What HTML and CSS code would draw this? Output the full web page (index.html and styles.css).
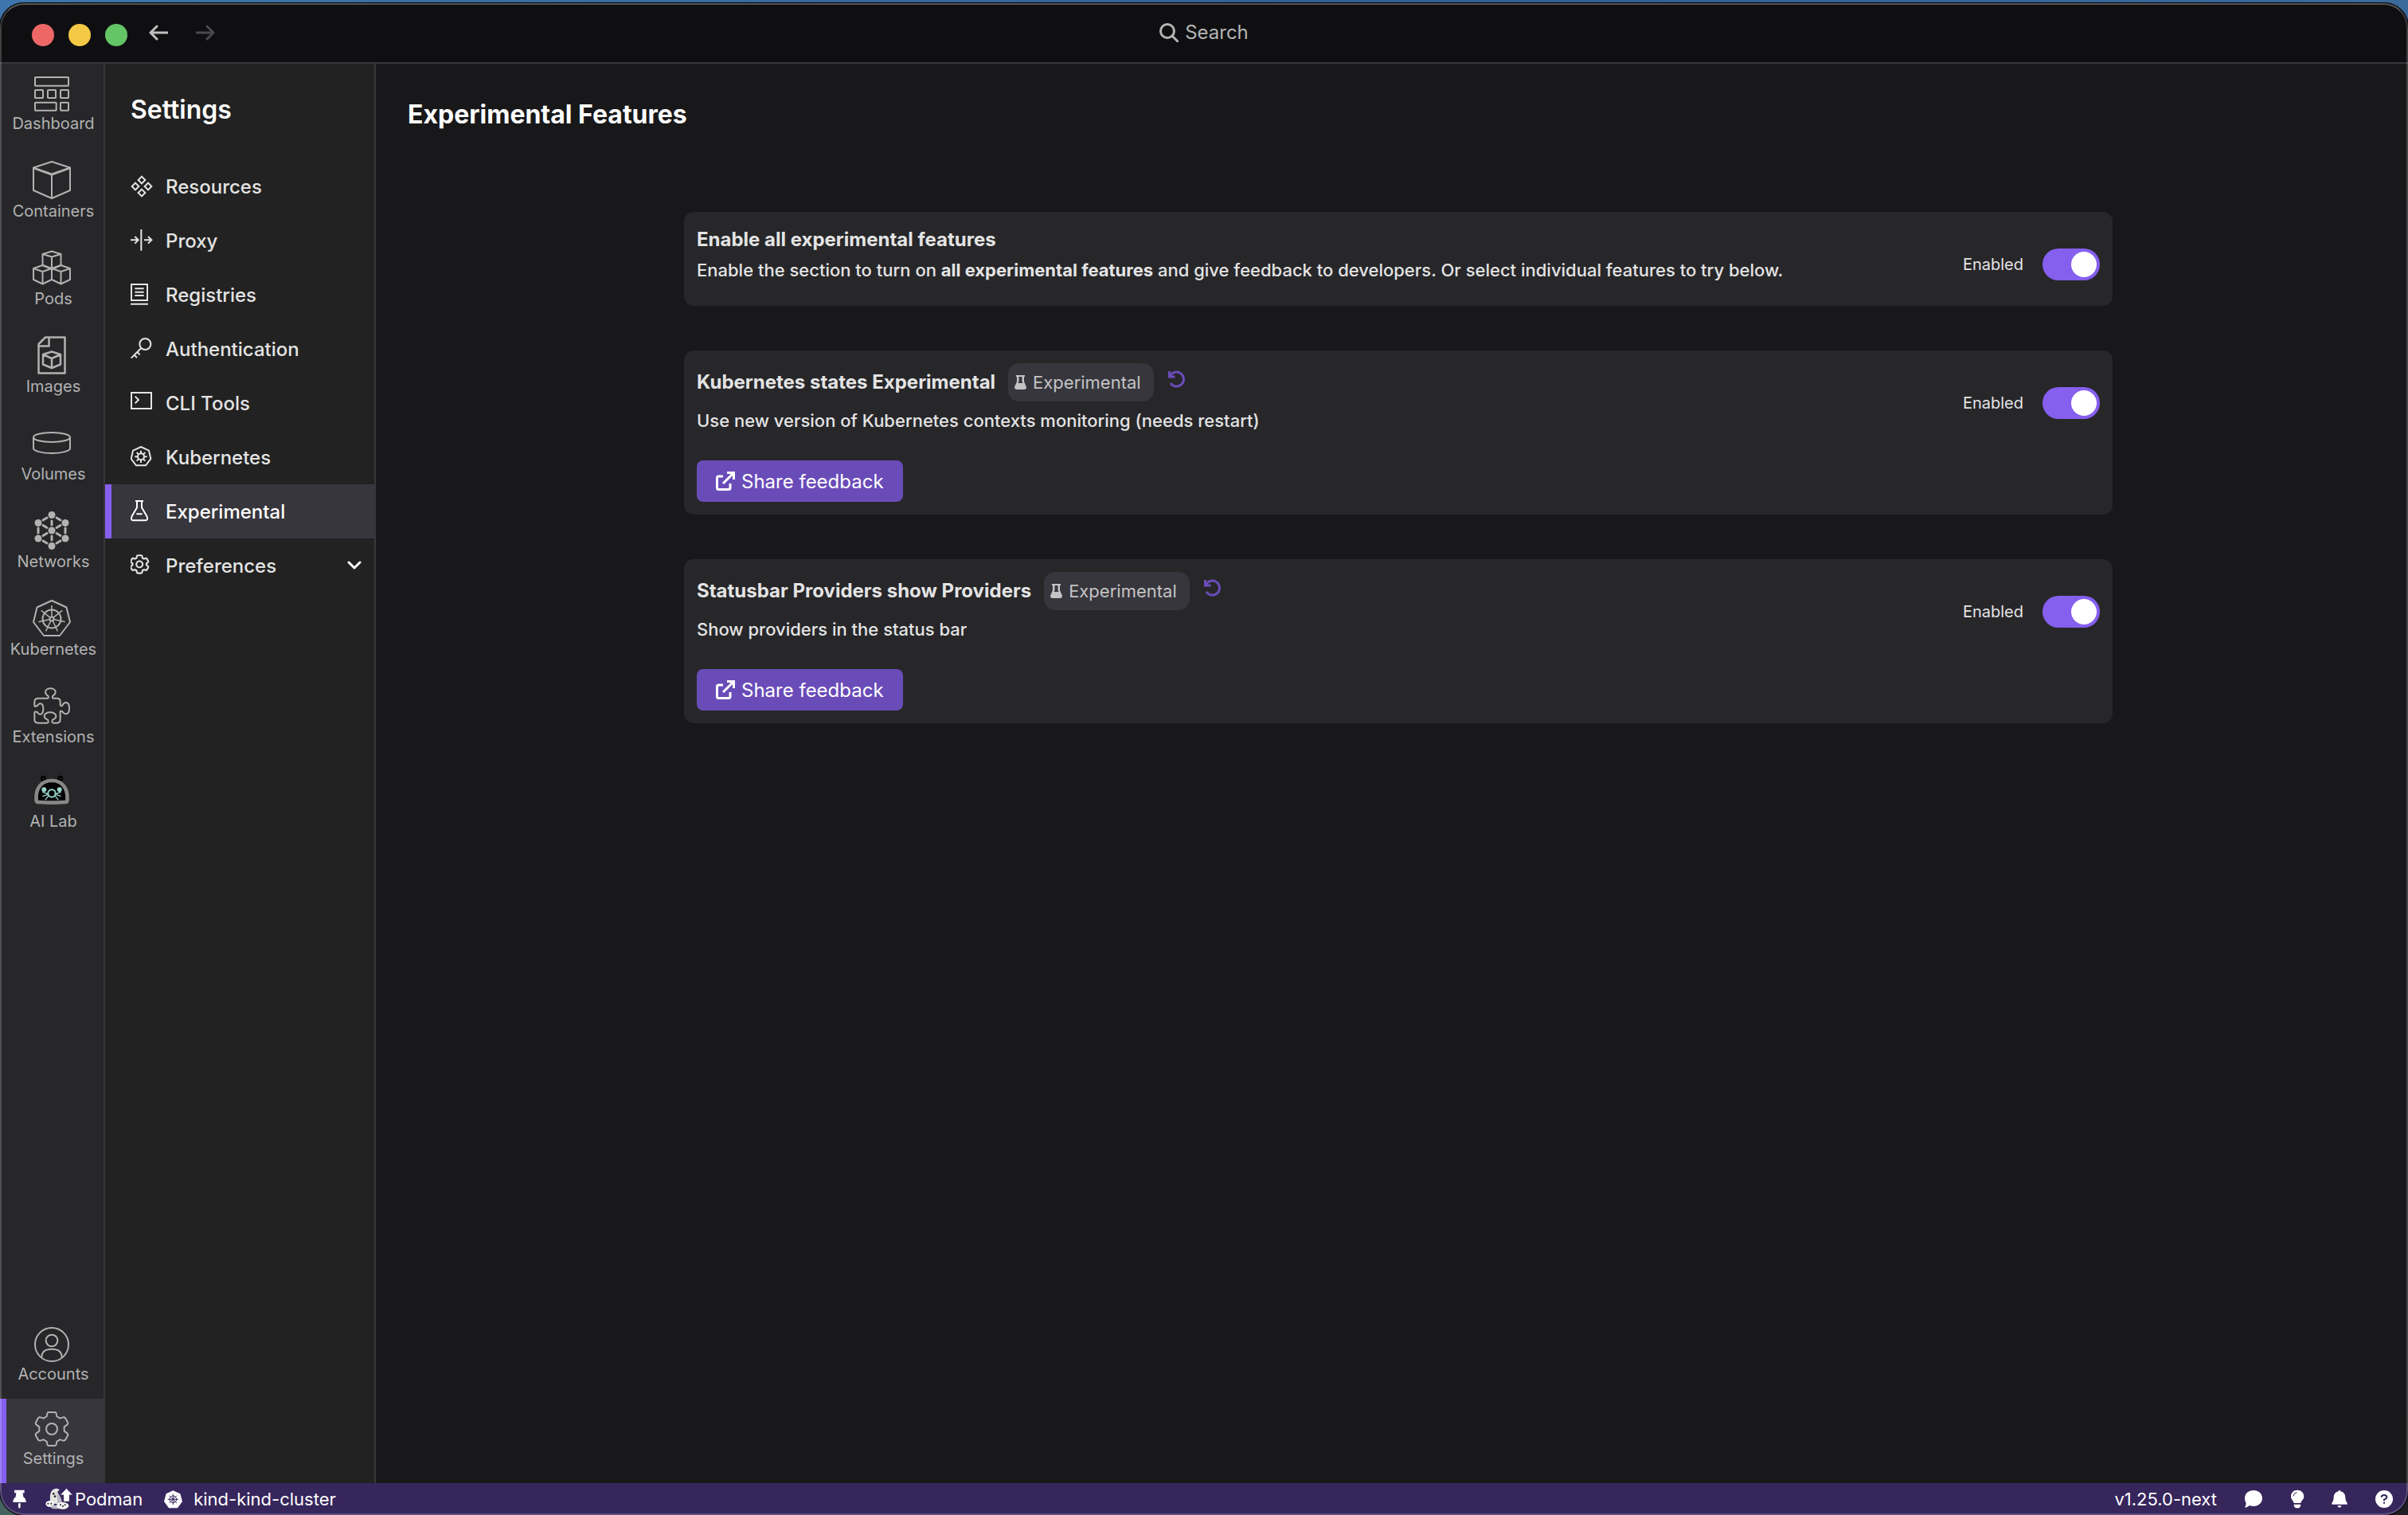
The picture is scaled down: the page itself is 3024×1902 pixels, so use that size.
FILE: index.html
```html
<!DOCTYPE html>
<html lang="en">
<head>
<meta charset="utf-8">
<title>Experimental Features</title>
<link rel="stylesheet" href="styles.css">
</head>
<body>
<div class="window">
  <header class="titlebar">
    <div class="titlebar-left">
      <button class="light light-close" aria-label="Close"></button>
      <button class="light light-min" aria-label="Minimize"></button>
      <button class="light light-max" aria-label="Zoom"></button>
      <button class="history" aria-label="Back"><svg width="24" height="20" viewBox="0 0 24 20"><path d="M23 10H2M10 2L2 10L10 18"/></svg></button>
      <button class="history history-off" aria-label="Forward"><svg width="24" height="20" viewBox="0 0 24 20"><path d="M1 10H22M14 2L22 10L14 18"/></svg></button>
    </div>
    <button class="search"><svg width="24" height="24" viewBox="0 0 24 24"><circle cx="10" cy="10" r="8.5"/><path d="M16 16L23 23"/></svg>Search</button>
    <div></div>
  </header>

  <div class="body">
    <nav class="rail" aria-label="App">
      <a class="rail-item" href="#dashboard"><svg width="44" height="44" viewBox="129 288 132 132"><rect x="132" y="291" width="126" height="32" rx="2"/><rect x="132" y="339" width="30" height="30" rx="2"/><rect x="180" y="339" width="30" height="30" rx="2"/><rect x="228" y="339" width="30" height="30" rx="2"/><rect x="132" y="386" width="80" height="30" rx="2"/><rect x="228" y="386" width="30" height="30" rx="2"/></svg><span>Dashboard</span></a>
      <a class="rail-item" href="#containers"><svg width="48" height="48" viewBox="0 0 48 48" stroke-width="2"><path d="M24 1L47 8.500V37L24 47L1 37V8.500ZM1 8.500L24 16.500L47 8.500M24 16.500V47M2 9.500L24 17.500L46 9.500"/></svg><span>Containers</span></a>
      <a class="rail-item" href="#pods"><svg width="48" height="48" viewBox="0 0 48 48" stroke-width="2"><path d="M24 3.500L35.500 7V21L24 26L12.500 21V7ZM12.500 7L24 10.500L35.500 7M24 10.500V38"/><path d="M12.500 21L24 25V39L12.500 44.500L1 39V25ZM1 25L12.500 29L24 25M12.500 29V44.500M35.500 21L47 25V39L35.500 44.500L24 39V25ZM24 25L35.500 29L47 25M35.500 29V44.500"/></svg><span>Pods</span></a>
      <a class="rail-item" href="#images"><svg width="48" height="48" viewBox="0 0 48 48" stroke-width="2.5"><path d="M16 1.500H40.500V46.500H7.500V10ZM20.500 2V12.500H8"/><path d="M24 19.500L35 23V35.500L24 40L13 35.500V23ZM13 23L24 28L35 23M24 28V40"/></svg><span>Images</span></a>
      <a class="rail-item" href="#volumes"><svg width="48" height="48" viewBox="0 0 48 48"><ellipse cx="24" cy="17" rx="23" ry="6"/><path d="M1 17V31C1 34 11 37 24 37S47 34 47 31V17"/></svg><span>Volumes</span></a>
      <a class="rail-item" href="#networks"><svg width="48" height="48" viewBox="0 0 48 48"><path stroke-width="3" stroke-linecap="round" d="M18 8L13 11M30 8L35 11M18 40L13 37M30 40L35 37M7 21V27M41 21V27M24 12V17M24 31V36M13 17.500L18 20.500M35 17.500L30 20.500M13 30.500L18 27.500M35 30.500L30 27.500"/><g class="solid"><circle cx="24" cy="4.500" r="4.500"/><circle cx="7" cy="14.500" r="4.500"/><circle cx="41" cy="14.500" r="4.500"/><circle cx="24" cy="24" r="4.500"/><circle cx="7" cy="34" r="4.500"/><circle cx="41" cy="34" r="4.500"/><circle cx="24" cy="43.500" r="4.500"/></g></svg><span>Networks</span></a>
      <a class="rail-item" href="#kubernetes"><svg width="48" height="48" viewBox="0 0 48 48"><path d="M24 2L42.500 10.500L47 29L34 46H14L1 29L5.500 10.500Z"/><circle cx="24" cy="25" r="11.500"/><circle cx="24" cy="25" r="2.500"/><path stroke-width="1.500" d="M24 22V8M26.300 23.200L37.300 14.400M26.900 25.700L40.600 28.800M25.300 27.700L31.400 40.300M22.700 27.700L16.600 40.300M21.100 25.700L7.400 28.800M21.700 23.200L10.700 14.400"/></svg><span>Kubernetes</span></a>
      <a class="rail-item" href="#extensions"><svg width="48" height="48" viewBox="123 306 144 144"><path d="M130 379V364Q130 350 144 350H178Q184 350 182 342C176 338 171 334 171 327C171 318 180 313 190 313S209 318 209 327C209 334 204 338 198 342Q196 350 202 350H214Q227 350 227 362V374Q227 380 234 378C238 370 242 366 248 366C257 366 261 376 261 388S257 409 248 409C242 409 238 405 234 399Q227 396 227 402V430Q227 443 214 443H204Q192 442 198 431C206 428 211 424 211 417C211 409 201 403 189 403S167 409 167 417C167 424 172 428 180 431Q186 443 176 443H144Q130 443 130 430V404Q132 398 140 402C144 408 147 410 151 410C159 410 163 400 163 389S159 370 151 370C147 370 144 374 140 378Q132 382 130 379Z"/></svg><span>Extensions</span></a>
      <a class="rail-item" href="#ai-lab"><svg width="44" height="44" viewBox="129 636 132 132"><g stroke="#000" stroke-width="7"><circle cx="163" cy="652" r="7"/><circle cx="227" cy="652" r="7"/></g><path class="helmet" d="M137 735C133 690 155 660 195 660S257 690 253 735Q252 741 245 741Q195 745 145 741Q138 741 137 735Z"/><g fill="#98d4c8" stroke="none"><circle cx="166" cy="694" r="9"/><circle cx="224" cy="694" r="9"/></g><g stroke="#98d4c8" stroke-width="4"><circle cx="195" cy="708" r="14" stroke-width="6"/><path d="M182 711L160 703M182 712L160 719M184 716L170 733M208 711L230 703M208 712L230 719M206 716L220 733"/></g></svg><span>AI Lab</span></a>
      <a class="rail-item rail-bottom" href="#accounts"><svg width="44" height="44" viewBox="129 78 132 132"><circle cx="195" cy="144" r="63"/><circle cx="195" cy="129" r="22"/><path d="M157 192C157 169 175 161 195 161S233 169 233 192"/></svg><span>Accounts</span></a>
      <a class="rail-item rail-active" href="#settings" aria-current="page"><svg width="44" height="44" viewBox="129 396 132 132"><circle cx="195" cy="462" r="21"/><path d="M183 399H207Q211 399 212 404L214 415Q220 417 226 422L238 418Q243 417 246 421L255 437Q257 441 254 445L242 454V470L254 479Q257 483 255 487L246 503Q243 507 238 506L226 502Q220 507 214 509L212 520Q211 525 207 525H183Q179 525 178 520L176 509Q170 507 164 502L152 506Q147 507 144 503L135 487Q133 483 136 479L148 470V454L136 445Q133 441 135 437L144 421Q147 417 152 418L164 422Q170 417 176 415L178 404Q179 399 183 399Z"/></svg><span>Settings</span></a>
    </nav>

    <nav class="side" aria-label="Settings">
      <h2 class="side-title">Settings</h2>
      <a class="side-item" href="#resources"><svg width="28" height="28" viewBox="492 660 84 84"><path d="M534 665L547 678L534 691L521 678ZM534 713L547 726L534 739L521 726ZM510 689L523 702L510 715L497 702ZM558 689L571 702L558 715L545 702Z"/></svg>Resources</a>
      <a class="side-item" href="#proxy"><svg width="28" height="28" viewBox="492 864 84 84"><path d="M532 864V944M492 904H520M508 891L521 904L508 917M543 904H570M558 891L571 904L558 917"/></svg>Proxy</a>
      <a class="side-item" href="#registries"><svg width="28" height="28" viewBox="492 1068 84 84"><path d="M495 1071H555V1131H495ZM508 1087H542M508 1100H542M508 1113H542M492 1145H558"/></svg>Registries</a>
      <a class="side-item" href="#authentication"><svg width="28" height="28" viewBox="492 72 84 84"><circle cx="547" cy="96" r="21"/><path d="M532 111L494 149M506 137L516 147M517 126L527 136"/></svg>Authentication</a>
      <a class="side-item" href="#cli"><svg width="28" height="28" viewBox="492 276 84 84"><path d="M495 279H570V339H495ZM509 293L522 306L509 319"/></svg>CLI Tools</a>
      <a class="side-item" href="#k8s"><svg width="28" height="28" viewBox="492 480 84 84"><path d="M531 483L561 497L568 528L549 553H513L494 528L501 497Z"/><circle cx="531" cy="520" r="12"/><path d="M531 497V508M531 532V543M508 520H519M543 520H554M515 504L522 511M547 504L540 511M515 536L522 529M547 536L540 529"/></svg>Kubernetes</a>
      <a class="side-item side-active" href="#experimental" aria-current="page"><svg width="28" height="28" viewBox="492 684 84 84"><path d="M510 687H540M516 687V712L497 744Q491 760 502 760H548Q559 760 553 744L534 712V687M514 736H536"/></svg>Experimental</a>
      <a class="side-item" href="#preferences"><svg width="28" height="28" viewBox="132 392 158 158" stroke-width="12"><circle cx="195" cy="462" r="22"/><path d="M183 399H207Q213 399 214 406L216 418L227 424L238 420Q244 418 248 424L256 438Q259 444 254 449L244 457V467L254 475Q259 480 256 486L248 500Q244 506 238 504L227 500L216 506L214 518Q213 525 207 525H183Q177 525 176 518L174 506L163 500L152 504Q146 506 142 500L134 486Q131 480 136 475L146 467V457L136 449Q131 444 134 438L142 424Q146 418 152 420L163 424L174 418L176 406Q177 399 183 399Z"/></svg>Preferences<svg class="chevron" width="18" height="12" viewBox="0 0 18 12" stroke-width="3"><path d="M2 2L9 9L16 2"/></svg></a>
    </nav>

    <main class="content">
      <h1 class="page-title">Experimental Features</h1>
      <div class="cards">
        <section class="card">
          <div class="card-text card-intro">
            <h2 class="card-title">Enable all experimental features</h2>
            <p class="card-desc">Enable the section to turn on <b>all experimental features</b> and give feedback to developers. Or select individual features to try below.</p>
          </div>
          <label class="switch">Enabled<input type="checkbox" role="switch" checked></label>
        </section>

        <section class="card">
          <div class="card-text">
            <div class="card-head">
              <h2 class="card-title">Kubernetes states Experimental</h2>
              <span class="badge"><svg width="15" height="18" viewBox="0 0 15 18"><path fill-rule="evenodd" d="M2 0H13V2H12V8L15 15Q15 18 12 18H3Q0 18 0 15L3 8V2H2ZM5.500 2V8L4.500 10H10.500L9.500 8V2Z"/></svg>Experimental</span>
              <button class="reset" aria-label="Reset"><svg width="22" height="22" viewBox="0 0 22 22"><path d="M1.500 1V8H8.500M2.500 7A9 9 0 1 1 3 16"/></svg></button>
            </div>
            <p class="card-desc">Use new version of Kubernetes contexts monitoring (needs restart)</p>
            <button class="share"><svg width="24" height="24" viewBox="0 0 24 24"><path d="M9 6H3.500Q1.500 6 1.500 8V20.500Q1.500 22.500 3.500 22.500H16Q18 22.500 18 20.500V15M14 1.500H22.500V10M22 2L9 15"/></svg>Share feedback</button>
          </div>
          <label class="switch">Enabled<input type="checkbox" role="switch" checked></label>
        </section>

        <section class="card">
          <div class="card-text">
            <div class="card-head">
              <h2 class="card-title">Statusbar Providers show Providers</h2>
              <span class="badge"><svg width="15" height="18" viewBox="0 0 15 18"><path fill-rule="evenodd" d="M2 0H13V2H12V8L15 15Q15 18 12 18H3Q0 18 0 15L3 8V2H2ZM5.500 2V8L4.500 10H10.500L9.500 8V2Z"/></svg>Experimental</span>
              <button class="reset" aria-label="Reset"><svg width="22" height="22" viewBox="0 0 22 22"><path d="M1.500 1V8H8.500M2.500 7A9 9 0 1 1 3 16"/></svg></button>
            </div>
            <p class="card-desc">Show providers in the status bar</p>
            <button class="share"><svg width="24" height="24" viewBox="0 0 24 24"><path d="M9 6H3.500Q1.500 6 1.500 8V20.500Q1.500 22.500 3.500 22.500H16Q18 22.500 18 20.500V15M14 1.500H22.500V10M22 2L9 15"/></svg>Share feedback</button>
          </div>
          <label class="switch">Enabled<input type="checkbox" role="switch" checked></label>
        </section>
      </div>
    </main>
  </div>

  <footer class="status">
    <button class="status-item" aria-label="Pin"><svg width="17" height="25" viewBox="48 690 51 75"><path d="M54 692H92V703H86L88 718Q98 724 98 738H49Q49 724 59 718L61 703H54ZM69 742H77V756L73 762L69 756Z"/></svg></button>
    <button class="status-item status-podman"><svg width="34" height="28" viewBox="170 682 102 84"><path fill="#e4e4e4" d="M190 740C184 715 188 688 207 685C216 683 224 687 222 691L215 697C224 712 232 722 234 745Z"/><path fill="#b9b5c2" d="M213 700C226 712 230 725 231 742L216 738Z"/><ellipse fill="#f4f4f4" cx="187" cy="742" rx="16" ry="12"/><ellipse fill="#bdb9c4" cx="210" cy="754" rx="20" ry="7"/><ellipse fill="#f4f4f4" cx="235" cy="749" rx="23" ry="13"/><g fill="#222"><circle cx="201" cy="704" r="4"/><circle cx="206" cy="714" r="4"/><circle cx="180" cy="741" r="3"/><circle cx="192" cy="741" r="3"/><circle cx="227" cy="746" r="3"/><circle cx="244" cy="746" r="3"/><circle cx="236" cy="751" r="3"/></g><path fill="#fff" stroke="#36265c" stroke-width="3" d="M249 683L274 709H261V734H238V709H225Z"/></svg>Podman</button>
    <button class="status-item status-kind"><svg width="23" height="23" viewBox="618 686 69 69"><path d="M652 687L679 699L687 728L669 753H636L618 728L626 699Z"/><g fill="none" stroke="#36265c" stroke-width="3"><circle cx="652" cy="720" r="13"/><path d="M652 700V740M632 720H672M638 706L666 734M666 706L638 734"/></g></svg>kind-kind-cluster</button>
    <div class="status-right">
      <button class="status-item">v1.25.0-next</button>
      <button class="status-item" aria-label="Feedback"><svg width="24" height="24" viewBox="588 90 72 72"><path d="M624 93C643 93 657 106 657 123S643 153 624 153Q616 153 609 150Q601 158 591 158Q596 151 596 142Q591 134 591 123C591 106 605 93 624 93Z"/></svg></button>
      <button class="status-item" aria-label="Tips"><svg width="18" height="24" viewBox="763 90 54 72"><path d="M790 92C804 92 815 102 815 116C815 128 804 132 803 141H777C776 132 766 128 766 116C766 102 776 92 790 92ZM777 146H803Q803 160 790 160T777 146Z"/><path fill="none" stroke="#36265c" stroke-width="3" d="M775 115Q776 102 789 101"/></svg></button>
      <button class="status-item" aria-label="Notifications"><svg width="20" height="24" viewBox="927 90 60 72"><path d="M957 92Q961 92 961 97C974 100 979 109 979 121Q979 134 986 141V146H928V141Q935 134 935 121C935 109 940 100 953 97Q953 92 957 92ZM949 151H965Q963 158 957 158T949 151Z"/></svg></button>
      <button class="status-item" aria-label="Help"><svg width="24" height="24" viewBox="1086 90 72 72"><circle cx="1122" cy="126" r="33"/><path fill="none" stroke="#36265c" stroke-width="6" d="M1112 119Q1112 111 1122 111T1132 119Q1132 124 1122 128V133M1122 137V143"/></svg></button>
    </div>
  </footer>
</div>
</body>
</html>
```
FILE: styles.css
```css
* { box-sizing: border-box; }

body {
  margin: 0;
  min-height: 100vh;
  padding-top: 4px;
  background: linear-gradient(100deg, #3f75ad, #2f5f93 60%, #3a6a9c) top / 100% 80px no-repeat,
              linear-gradient(90deg, #45635f, #202024 40%);
  font-family: Inter, "Liberation Sans", sans-serif;
  font-size: 22px;
  color: #e4e4e4;
}

h1, h2, p { margin: 0; }
a { color: inherit; text-decoration: none; }
button { margin: 0; padding: 0; border: 0; background: none; color: inherit; font: inherit; }
svg { display: block; flex: none; }

.window {
  position: relative;
  display: flex;
  flex-direction: column;
  min-height: calc(100vh - 4px);
  border-radius: 30px;
  overflow: hidden;
  background: #18181a;
  box-shadow: 0 0 0 1px #000;
}

/* thin light rim drawn over the window's edge */
.window::after {
  content: "";
  position: absolute;
  inset: 0;
  border: 2px solid rgba(255, 255, 255, 0.2);
  border-top-color: rgba(255, 255, 255, 0.3);
  border-radius: 30px;
  pointer-events: none;
}

.titlebar {
  display: grid;
  grid-template-columns: 1fr auto 1fr;
  align-items: center;
  height: 76px;
  background: #0f0f11;
  border-bottom: 2px solid #37363d;
}

.titlebar-left { display: flex; align-items: center; gap: 18px; padding: 6px 0 0 40px; }
.light { width: 28px; height: 28px; border-radius: 50%; }
.light-close { background: #ee6767; }
.light-min { background: #f4c945; }
.light-max { background: #64c567; }
.history { margin: 0 8px 6px 9px; color: #c0c0c0; }
.history-off { color: #4a4a4c; }
.history svg, .search svg { fill: none; stroke: currentColor; stroke-width: 3; stroke-linecap: round; stroke-linejoin: round; }
.search { display: flex; align-items: center; gap: 8px; font-size: 24px; line-height: 32px; color: #b4b4b4; }

.body { flex: 1; display: flex; }

.rail {
  display: flex;
  flex-direction: column;
  flex: none;
  width: 132px;
  background: #27272a;
  border-right: 2px solid #37363d;
  color: #b2b2b2;
}

.rail-item {
  display: flex;
  flex-direction: column;
  align-items: center;
  padding: 16px 0;
  font-size: 20px;
  line-height: 30px;
}
.rail-item span { padding-left: 4px; }
.rail-item svg { fill: none; stroke: currentColor; stroke-linejoin: round; }
.rail-item svg[viewBox="0 0 48 48"]:not([stroke-width]) { stroke-width: 2; }
.rail-item svg[viewBox$="132"], .rail-item svg[viewBox$="144"] { stroke-width: 6; }
.rail-item .solid { fill: currentColor; stroke: none; }
.helmet { fill: #000; stroke: #888; stroke-width: 14; }
.rail-bottom { margin-top: auto; }
.rail-active {
  margin-right: -2px;
  padding-right: 2px;
  background: #37363d linear-gradient(#855fee, #855fee) left / 8px 100% no-repeat;
}

.side { flex: none; width: 340px; background: #222222; border-right: 2px solid #37363d; }
.side-title { padding: 38px 32px 42px; font-size: 32px; line-height: 40px; font-weight: 600; color: #fff; }
.side-item {
  display: flex;
  align-items: center;
  gap: 16px;
  height: 68px;
  padding: 0 16px 0 24px;
  border-left: 8px solid transparent;
  font-size: 24px;
  font-weight: 500;
}
.side-item svg { fill: none; stroke: currentColor; }
.side-item svg:not([stroke-width]) { stroke-width: 6; }
.side-active { background: #37363d; border-left-color: #855fee; color: #fff; }
.chevron { margin-left: auto; color: #fff; stroke-linecap: round; stroke-linejoin: round; }

.content { flex: 1; min-width: 0; padding-left: 16px; }
.page-title { padding: 44px 24px 0; font-size: 32px; line-height: 40px; font-weight: 700; color: #fff; }
.cards { display: flex; flex-direction: column; gap: 56px; max-width: 1794px; margin: 102px auto 0; }

.card {
  display: flex;
  justify-content: space-between;
  padding: 16px;
  border-radius: 12px;
  background: #27272a;
}
.card-intro { padding: 1px 0 13px; }
.card-title { font-size: 24px; line-height: 36px; font-weight: 700; }
.card-desc { margin-top: 4px; line-height: 32px; font-weight: 450; }
.card-desc b { font-weight: 700; }
.card-head { display: flex; align-items: center; gap: 16px; margin-bottom: 8px; }
.badge {
  display: flex;
  align-items: center;
  gap: 8px;
  height: 48px;
  padding: 0 16px 0 8px;
  border-radius: 14px;
  background: #37363d;
  color: #c4c4c4;
}
.badge svg { fill: currentColor; }
.reset { align-self: flex-start; height: 40px; padding-left: 2px; color: #6a4cb8; }
.reset svg { fill: none; stroke: currentColor; stroke-width: 3; }

.share {
  display: flex;
  align-items: center;
  gap: 8px;
  height: 52px;
  margin-top: 34px;
  padding: 0 24px;
  border-radius: 8px;
  background: #6a4cb8;
  color: #fff;
  font-size: 24px;
}
.share svg { fill: none; stroke: currentColor; stroke-width: 3; }

.switch { display: flex; align-items: center; gap: 24px; align-self: flex-start; padding-top: 30px; font-size: 20px; }
.switch input {
  appearance: none;
  display: flex;
  width: 72px;
  height: 40px;
  margin: 0;
  padding: 4px;
  border-radius: 20px;
  background: #855fee;
}
.switch input::before { content: ""; width: 32px; height: 32px; margin-left: auto; border-radius: 50%; background: #fff; }

.status {
  display: flex;
  align-items: center;
  height: 40px;
  padding: 0 18px 0 16px;
  background: #36265c;
  color: #fff;
}
.status svg { fill: #fff; }
.status-item { display: flex; align-items: center; gap: 3px; }
.status-podman { margin: 0 27px 0 24px; }
.status-kind { gap: 14px; }
.status-right { display: flex; align-items: center; gap: 34px; margin-left: auto; }
```
